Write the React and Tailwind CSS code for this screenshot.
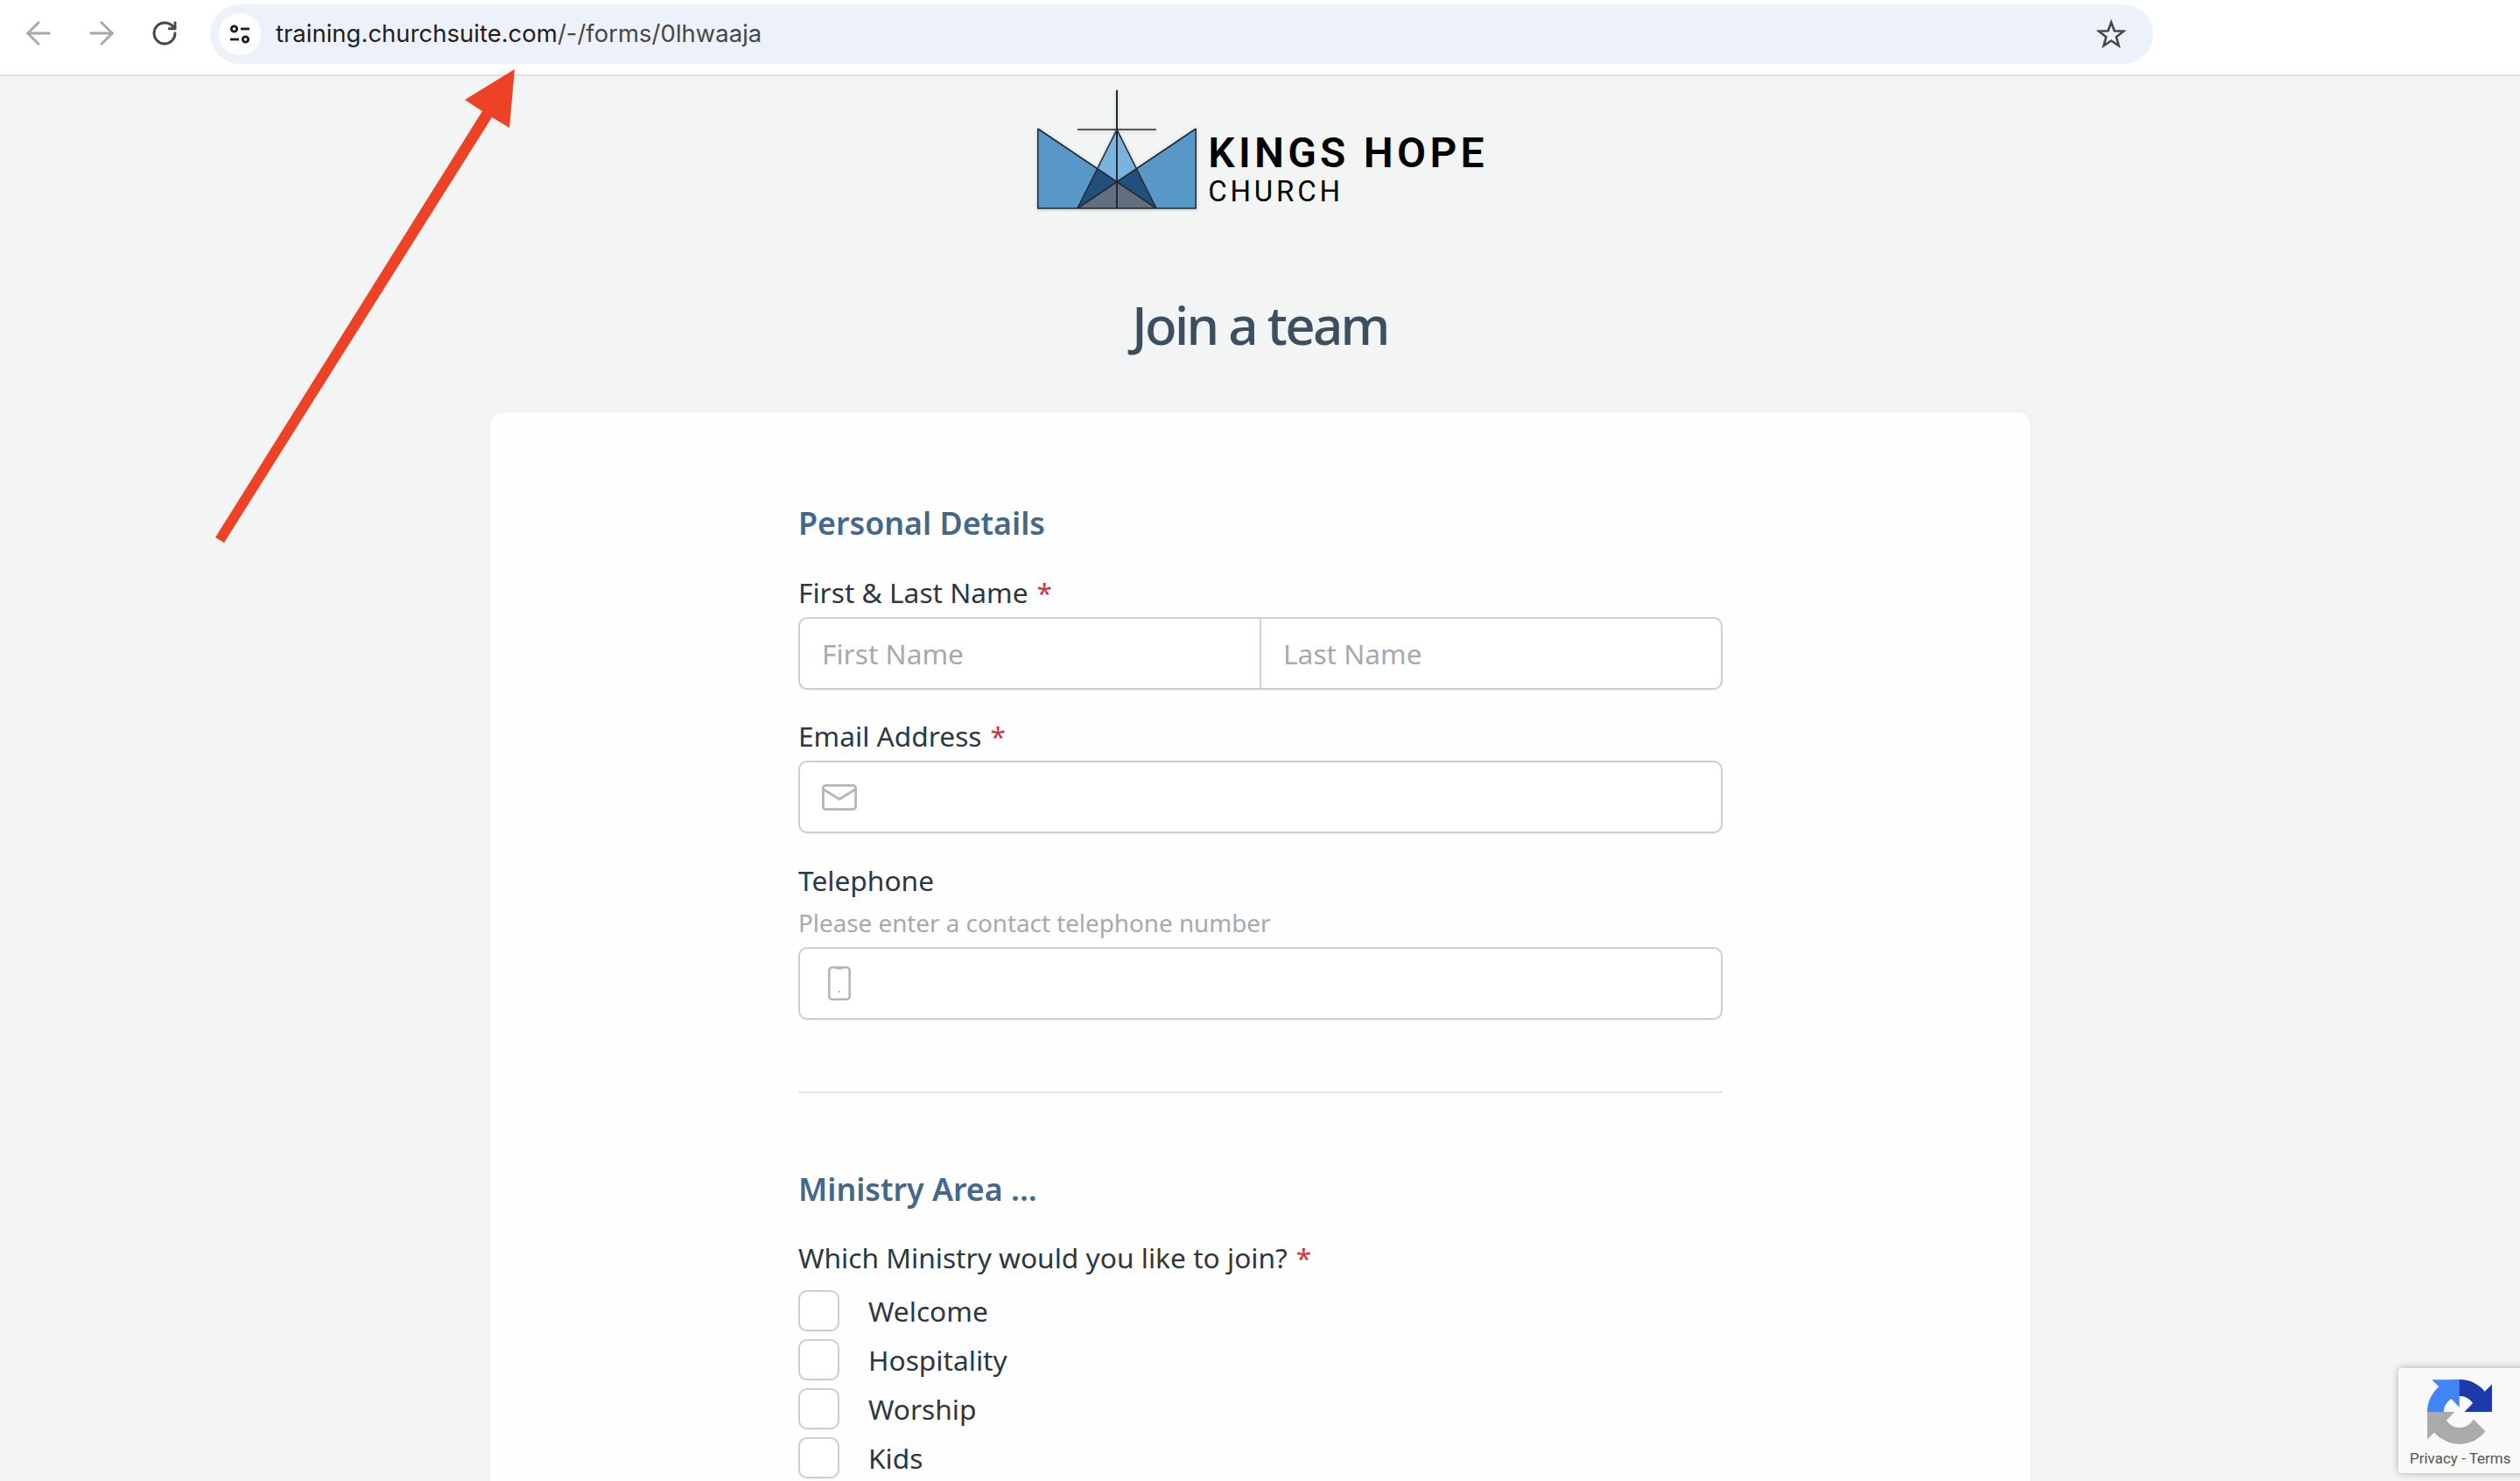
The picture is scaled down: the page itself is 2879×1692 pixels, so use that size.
import { ArrowLeft, ArrowRight, RotateCw } from 'lucide-react';

const inputClass = 'min-w-0 flex-1 h-full bg-transparent px-[25px] text-[31.7px] text-[#2d3740] outline-none placeholder:text-[#a6a9b0]';
const boxClass = 'flex h-[83px] items-center rounded-[10px] border-2 border-[#cdcdd3] bg-white shadow-[0_1px_2px_rgba(0,0,0,0.05)]';

const TuneIcon = () => (
  <svg width="24" height="24" viewBox="0 0 24 24" fill="none" stroke="#1f1f1f" strokeWidth="2.800">
    <circle cx="5.500" cy="6" r="3.200" />
    <path d="M13 6h10" />
    <circle cx="18.500" cy="18" r="3.200" />
    <path d="M1 18h10" />
  </svg>
);

const StarIcon = () => (
  <svg width="34" height="34" viewBox="0 0 34 34" fill="none" stroke="#474747" strokeWidth="2.600" strokeLinejoin="miter">
    <path d="M17 3.500L20.600 13.300L31 13.700L22.800 20.200L25.600 30.300L17 24.500L8.400 30.300L11.200 20.200L3 13.700L13.400 13.300Z" />
  </svg>
);

const MailIcon = () => (
  <svg width="40" height="30" viewBox="0 0 40 30" fill="none" stroke="#b5b6bd" strokeWidth="2.800" className="ml-[25px] shrink-0">
    <rect x="1.400" y="1.400" width="37.200" height="27.200" rx="3" />
    <path d="M2 6l18 11 18-11" />
  </svg>
);

const PhoneIcon = () => (
  <svg width="26" height="39" viewBox="0 0 26 39" fill="none" stroke="#b5b6bd" strokeWidth="2.600" className="ml-[32px] shrink-0">
    <rect x="1.300" y="1.300" width="23.400" height="36.400" rx="3.500" />
    <path d="M9 2h8" strokeWidth="3" />
    <circle cx="13" cy="29" r="1.200" fill="#b5b6bd" stroke="none" />
  </svg>
);

const Logo = () => (
  <div className="ml-[6px] flex items-start justify-center">
    <svg width="182" height="136" viewBox="0 0 182 136" className="shrink-0 drop-shadow-[0_1px_2px_rgba(0,0,0,0.2)]">
      <path d="M0.7 44L91 105L181.300 44V135H0.7Z" fill="#5898c8" />
      <path d="M91 45L68.500 90L91 105L113.500 90Z" fill="#7ab3de" />
      <path d="M68.500 90L46 135L91 105Z" fill="#22507c" />
      <path d="M113.500 90L136 135L91 105Z" fill="#22507c" />
      <path d="M46 135H136L91 105Z" fill="#626f80" />
      <g fill="none" stroke="#222a30" strokeWidth="1.600">
        <path d="M0.700 44L136 135M181.300 44L46 135M0.700 44V135H181.300V44" />
        <path d="M91 45L46 135M91 45L136 135" />
        <path d="M91 0V135" strokeWidth="2" />
        <path d="M46 45H136" />
      </g>
    </svg>
    <div className="ml-[13px] font-['Roboto',sans-serif] text-black">
      <div className="mt-[44px] text-[48px] leading-[56px] font-semibold tracking-[4.250px] whitespace-nowrap">KINGS HOPE</div>
      <div className="-mt-[2px] text-[33px] leading-[36px] tracking-[3.800px] whitespace-nowrap">CHURCH</div>
    </div>
  </div>
);

const Required = () => <span className="ml-[10px] text-[#c9353f]">*</span>;

const Label = ({ children, required, className = '' }) => (
  <div className={`text-[31.7px] leading-[48px] text-[#2d3740] ${className}`}>
    {children}
    {required && <Required />}
  </div>
);

const SectionTitle = ({ children, className = '' }) => (
  <h2 className={`text-[35.800px] leading-[48px] font-semibold text-[#44688a] ${className}`}>{children}</h2>
);

const ministries = ['Welcome', 'Hospitality', 'Worship', 'Kids'];

const App = () => (
  <div className="relative h-[1692px] overflow-hidden bg-[#f3f5f4] font-['Noto_Sans',sans-serif]">
    <header className="flex h-[87px] items-start border-b-2 border-[#dfe1e0] bg-white">
      <div className="flex h-[76px] w-[240px] shrink-0 items-center pl-[23px]">
        <ArrowLeft size={42} strokeWidth={1.7} color="#a9a9a9" />
        <ArrowRight size={42} strokeWidth={1.7} color="#a9a9a9" className="ml-[30px]" />
        <RotateCw size={32} strokeWidth={2.2} color="#474747" className="ml-[35px]" />
      </div>
      <div className="mt-[5px] flex h-[68px] w-[2220px] items-center rounded-full bg-[#edf2fa] pl-[10px] pr-[31px]">
        <div className="flex h-[48px] w-[48px] items-center justify-center rounded-full bg-white">
          <TuneIcon />
        </div>
        <span className="ml-[17px] flex-1 font-['Inter',sans-serif] text-[27.500px] text-[#1f1f1f]">
          training.churchsuite.com<span className="text-[#474747]">/-/forms/0lhwaaja</span>
        </span>
        <StarIcon />
      </div>
    </header>

    <main className="pt-[16px]">
      <Logo />
      <h1 className="mt-[96px] text-center text-[60px] leading-[72px] font-medium tracking-[-2.700px] text-[#3c4f60]">Join a team</h1>
      <section className="ml-[560px] mt-[64px] h-[1400px] w-[1760px] rounded-[14px] bg-[#fefefe] pt-[102px] shadow-[0_0_4px_rgba(0,0,0,0.05)]">
        <div className="ml-[352px] w-[1056px]">
          <SectionTitle className="mb-[32px]">Personal Details</SectionTitle>
          <Label required className="mb-[4px]">First &amp; Last Name</Label>
          <div className={boxClass}>
            <input className={inputClass} placeholder="First Name" />
            <div className="h-full w-[2px] bg-[#cdcdd3]" />
            <input className={inputClass} placeholder="Last Name" />
          </div>

          <Label required className="mt-[29px] mb-[4px]">Email Address</Label>
          <div className={boxClass}>
            <MailIcon />
            <input className={inputClass} />
          </div>

          <Label className="mt-[30px]">Telephone</Label>
          <div className="mt-[4px] mb-[8px] text-[27.800px] leading-[40px] text-[#a6a9b0]">Please enter a contact telephone number</div>
          <div className={boxClass}>
            <PhoneIcon />
            <input className={inputClass} />
          </div>

          <hr className="mt-[82px] border-t-2 border-[#e2e4e6]" />

          <SectionTitle className="mt-[85px]">Ministry Area ...</SectionTitle>
          <Label required className="mt-[31px] mb-[13px]">Which Ministry would you like to join?</Label>
          <div className="flex flex-col gap-[9px]">
            {ministries.map((name) => (
              <div key={name} className="flex h-[47px] items-center">
                <div className="h-[47px] w-[47px] rounded-[10px] border-2 border-[#cdcdd3] bg-white shadow-[0_1px_2px_rgba(0,0,0,0.05)]" />
                <span className="ml-[33px] text-[31.7px] text-[#2d3740]">{name}</span>
              </div>
            ))}
          </div>
        </div>
      </section>
    </main>

    {/* annotation arrow pointing at the address bar */}
    <svg width="360" height="550" viewBox="240 75 360 550" className="absolute left-[240px] top-[75px]">
      <path d="M588 79L582 146L562 134L256 620L246 614L551 127L531 114Z" fill="#ee4227" />
    </svg>

    {/* recaptcha badge */}
    <div className="absolute left-[2740px] top-[1563px] flex h-[120px] w-[160px] flex-col rounded-l-[4px] bg-[#f9f9f9] shadow-[0_0_8px_rgba(0,0,0,0.3)]">
      <svg width="74" height="74" viewBox="0 0 64 64" className="ml-[33px] mt-[13px]">
        <path d="M64 31.955l-.033-1.37V4.687l-7.16 7.16C50.948 4.674 42.033.093 32.05.093c-10.4 0-19.622 4.96-25.458 12.64l11.736 11.86a15.55 15.55 0 0 1 4.754-5.334c2.05-1.6 4.952-2.906 8.968-2.906.485 0 .86.057 1.135.163 4.976.393 9.288 3.14 11.828 7.124l-8.307 8.307c10.522-.04 22.4-.066 27.295.005" fill="#1c3aa9" />
        <path d="M31.862.094l-1.37.033H4.594l7.16 7.16C4.58 13.147 0 22.06 0 32.046c0 10.4 4.96 19.622 12.64 25.458L24.5 45.768a15.55 15.55 0 0 1-5.334-4.754c-1.6-2.05-2.906-4.952-2.906-8.968 0-.485.057-.86.163-1.135.393-4.976 3.14-9.288 7.124-11.828l8.307 8.307c-.04-10.522-.066-22.4.005-27.295" fill="#4285f4" />
        <path d="M.001 32.045l.033 1.37v25.898l7.16-7.16c5.86 7.173 14.774 11.754 24.76 11.754 10.4 0 19.622-4.96 25.458-12.64l-11.736-11.86a15.55 15.55 0 0 1-4.754 5.334c-2.05 1.6-4.952 2.906-8.968 2.906-.485 0-.86-.057-1.135-.163-4.976-.393-9.288-3.14-11.828-7.124l8.307-8.307C17.776 32.094 5.9 32.12 1.005 32.05" fill="#ababab" />
      </svg>
      <div className="ml-[13px] mt-[4px] font-['Roboto',sans-serif] text-[17px] leading-[24px] whitespace-nowrap text-[#555]">Privacy - Terms</div>
    </div>
  </div>
);

export default App;
